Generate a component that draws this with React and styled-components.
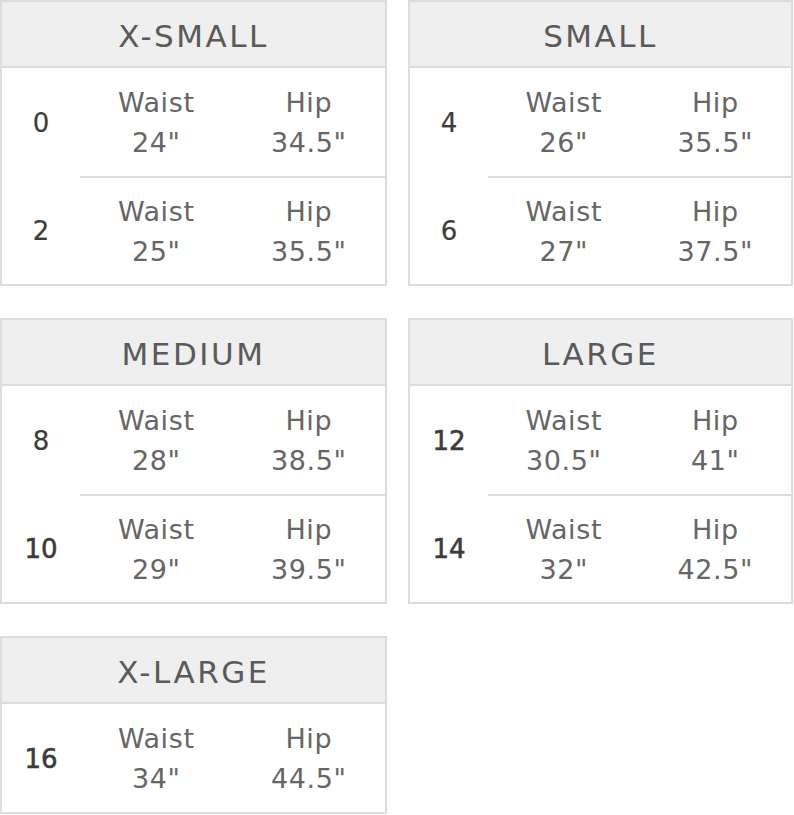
import React from "react";
import styled, { createGlobalStyle } from "styled-components";

const GlobalStyle = createGlobalStyle`
  html, body {
    margin: 0;
    padding: 0;
    background: #ffffff;
  }
  body {
    font-family: "DejaVu Sans", "Liberation Sans", sans-serif;
    color: #666;
  }
`;

const Grid = styled.div`
  display: grid;
  grid-template-columns: 387px 385px;
  column-gap: 21px;
  row-gap: 32px;
  align-items: start;
`;

const Card = styled.section`
  box-sizing: border-box;
  border: 2px solid #dcdcdc;
  background: #fff;
`;

const Header = styled.h2`
  box-sizing: border-box;
  margin: 0;
  padding-top: 4px;
  height: 66px;
  background: #efefef;
  border-bottom: 2px solid #dcdcdc;
  display: flex;
  align-items: center;
  justify-content: center;
  font-size: 31px;
  font-weight: normal;
  letter-spacing: 2.5px;
  color: #5a5a5a;
`;

const Row = styled.div`
  display: flex;
  height: 108px;
`;

const SizeCell = styled.div`
  width: 78px;
  flex: none;
  display: flex;
  align-items: center;
  justify-content: center;
  padding-top: 2px;
  font-size: 26px;
  color: #3c3c3c;
  -webkit-text-stroke: ${(p) => (p.$wide ? "0.6px #3c3c3c" : "0.2px #3c3c3c")};
`;

const Measures = styled.div`
  flex: 1;
  display: grid;
  grid-template-columns: 1fr 1fr;
  align-items: center;
  border-top: ${(p) => (p.$divided ? "2px solid #dcdcdc" : "none")};
`;

const Measure = styled.div`
  display: flex;
  flex-direction: column;
  align-items: center;
  padding-top: 2px;
  font-size: 27px;
  line-height: 40px;
  color: #666;
  letter-spacing: 0.6px;
`;

const data = [
  {
    title: "X-SMALL",
    rows: [
      { size: "0", waist: "24", hip: "34.5" },
      { size: "2", waist: "25", hip: "35.5" },
    ],
  },
  {
    title: "SMALL",
    rows: [
      { size: "4", waist: "26", hip: "35.5" },
      { size: "6", waist: "27", hip: "37.5" },
    ],
  },
  {
    title: "MEDIUM",
    rows: [
      { size: "8", waist: "28", hip: "38.5" },
      { size: "10", waist: "29", hip: "39.5" },
    ],
  },
  {
    title: "LARGE",
    rows: [
      { size: "12", waist: "30.5", hip: "41" },
      { size: "14", waist: "32", hip: "42.5" },
    ],
  },
  {
    title: "X-LARGE",
    rows: [{ size: "16", waist: "34", hip: "44.5" }],
  },
];

export default function App() {
  return (
    <>
      <GlobalStyle />
      <Grid>
        {data.map((group) => (
          <Card key={group.title}>
            <Header>{group.title}</Header>
            {group.rows.map((r, i) => (
              <Row key={r.size}>
                <SizeCell $wide={r.size.length > 1}>{r.size}</SizeCell>
                <Measures $divided={i > 0}>
                  <Measure>
                    <span>Waist</span>
                    <span>{r.waist}"</span>
                  </Measure>
                  <Measure>
                    <span>Hip</span>
                    <span>{r.hip}"</span>
                  </Measure>
                </Measures>
              </Row>
            ))}
          </Card>
        ))}
      </Grid>
    </>
  );
}
